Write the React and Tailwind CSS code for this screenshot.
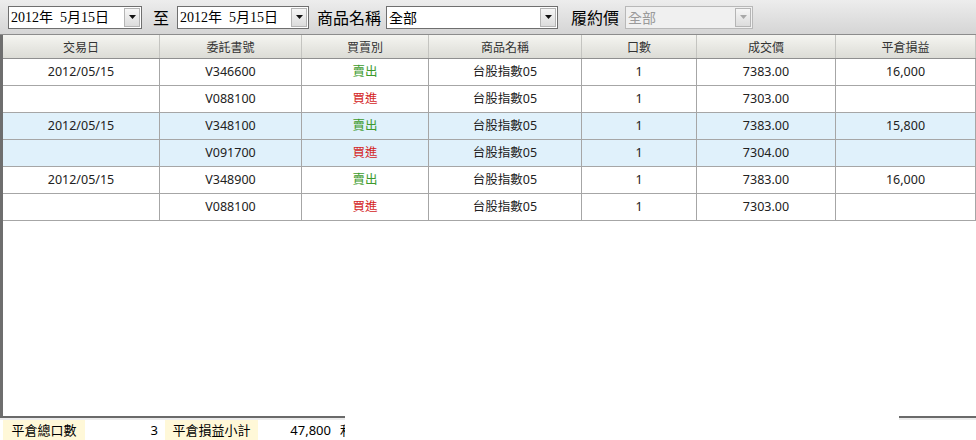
import React from 'react'

const font = { fontFamily: '"Noto Sans", "Noto Sans CJK TC", sans-serif' }

const cols = [157, 142, 127, 153, 115, 139, 140]
const headers = ['交易日', '委託書號', '買賣別', '商品名稱', '口數', '成交價', '平倉損益']

const rows = [
  ['2012/05/15', 'V346600', '賣出', '台股指數05', '1', '7383.00', '16,000', false],
  ['', 'V088100', '買進', '台股指數05', '1', '7303.00', '', false],
  ['2012/05/15', 'V348100', '賣出', '台股指數05', '1', '7383.00', '15,800', true],
  ['', 'V091700', '買進', '台股指數05', '1', '7304.00', '', true],
  ['2012/05/15', 'V348900', '賣出', '台股指數05', '1', '7383.00', '16,000', false],
  ['', 'V088100', '買進', '台股指數05', '1', '7303.00', '', false],
]

const Arrow = ({ disabled }) => (
  <div className="w-[16px] h-[19px] mt-[1px] mr-[1px] flex items-center justify-center border border-[#b5b5b5] bg-gradient-to-b from-[#f6f6f6] to-[#dcdcdc]">
    <svg width="7" height="4" viewBox="0 0 7 4">
      <path d="M0 0h7L3.5 4z" fill={disabled ? '#a8a8a8' : '#111'} />
    </svg>
  </div>
)

const Combo = ({ width, text, disabled, serif }) => (
  <div
    className={`h-[23px] flex items-start border ${disabled ? 'border-[#b8b8b8] bg-[#f0f0f0]' : 'border-[#6f6f6f] bg-white'}`}
    style={{ width }}
  >
    <div
      className={`flex-1 pl-[2px] whitespace-pre text-[14px] leading-[21px] ${disabled ? 'text-[#9a9a9a]' : 'text-black'}`}
      style={{ fontFamily: serif ? '"Liberation Serif", "Noto Sans CJK TC", serif' : '"Noto Sans CJK TC", sans-serif' }}
    >
      {text}
    </div>
    <Arrow disabled={disabled} />
  </div>
)

const Label = ({ children, className }) => (
  <span className={`text-[16px] text-black ${className}`} style={{ fontFamily: '"Noto Sans CJK TC", sans-serif' }}>
    {children}
  </span>
)

export default function App() {
  return (
    <div className="w-[976px] h-[440px] overflow-hidden bg-white flex flex-col" style={font}>
      <div className="h-[35px] shrink-0 flex items-center bg-gradient-to-b from-[#ededed] to-[#d5d5d5] border-b border-[#8c8c8c]">
        <div className="ml-[8px]">
          <Combo width={134} text="2012年  5月15日" serif />
        </div>
        <Label className="ml-[11px] mr-[8px]">至</Label>
        <Combo width={132} text="2012年  5月15日" serif />
        <Label className="ml-[8px] mr-[5px]">商品名稱</Label>
        <Combo width={172} text="全部" />
        <Label className="ml-[13px] mr-[6px]">履約價</Label>
        <Combo width={128} text="全部" disabled />
      </div>

      <div className="h-[381px] shrink-0 flex flex-col border-l-[3px] border-[#6e6e6e] text-[12.5px] text-[#222]">
        <div className="h-[24px] shrink-0 flex bg-gradient-to-b from-[#f5f5f1] to-[#dcdcd6] border-b border-[#8f8f8f]">
          {headers.map((h, i) => (
            <div
              key={h}
              className="flex items-center justify-center border-r border-[#c4c4c0] text-[12px] text-[#333]"
              style={{ width: cols[i], fontFamily: '"Noto Sans CJK TC", sans-serif' }}
            >
              {h}
            </div>
          ))}
        </div>
        {rows.map((r, ri) => (
          <div key={ri} className={`h-[27px] shrink-0 flex border-b border-[#a6a6a6] ${r[7] ? 'bg-[#e0f1fb]' : 'bg-white'}`}>
            {r.slice(0, 7).map((c, ci) => (
              <div
                key={ci}
                className={`flex items-center justify-center border-r border-[#a6a6a6] ${
                  ci === 2 ? (c === '賣出' ? 'text-[#3d9a2c]' : 'text-[#d42424]') : ''
                }`}
                style={{ width: cols[ci] }}
              >
                {c}
              </div>
            ))}
          </div>
        ))}
      </div>

      <div className="h-[2px] shrink-0 flex">
        <div className="w-[345px] bg-[#6a6a6a]" />
        <div className="w-[554px] bg-white" />
        <div className="flex-1 bg-[#6a6a6a]" />
      </div>
      <div className="h-[2px] shrink-0 flex">
        <div className="w-[345px] bg-[#ececec]" />
        <div className="w-[554px] bg-white" />
        <div className="flex-1 bg-[#ececec]" />
      </div>

      <div className="h-[22px] shrink-0 flex items-stretch text-[13px] text-black" style={{ fontFamily: '"Noto Sans", "Noto Sans CJK TC", sans-serif' }}>
        <div className="w-[3px]" />
        <div className="w-[82px] bg-[#fff8d8] flex items-center justify-center">平倉總口數</div>
        <div className="w-[78px] flex items-center justify-end pr-[5px]">3</div>
        <div className="w-[2px]" />
        <div className="w-[93px] bg-[#fff8d8] flex items-center justify-center">平倉損益小計</div>
        <div className="w-[75px] flex items-center justify-end pr-[2px]">47,800</div>
        <div className="w-[12px] overflow-hidden flex items-center pl-[7px]">
          <span className="whitespace-nowrap">利潤</span>
        </div>
      </div>
    </div>
  )
}
